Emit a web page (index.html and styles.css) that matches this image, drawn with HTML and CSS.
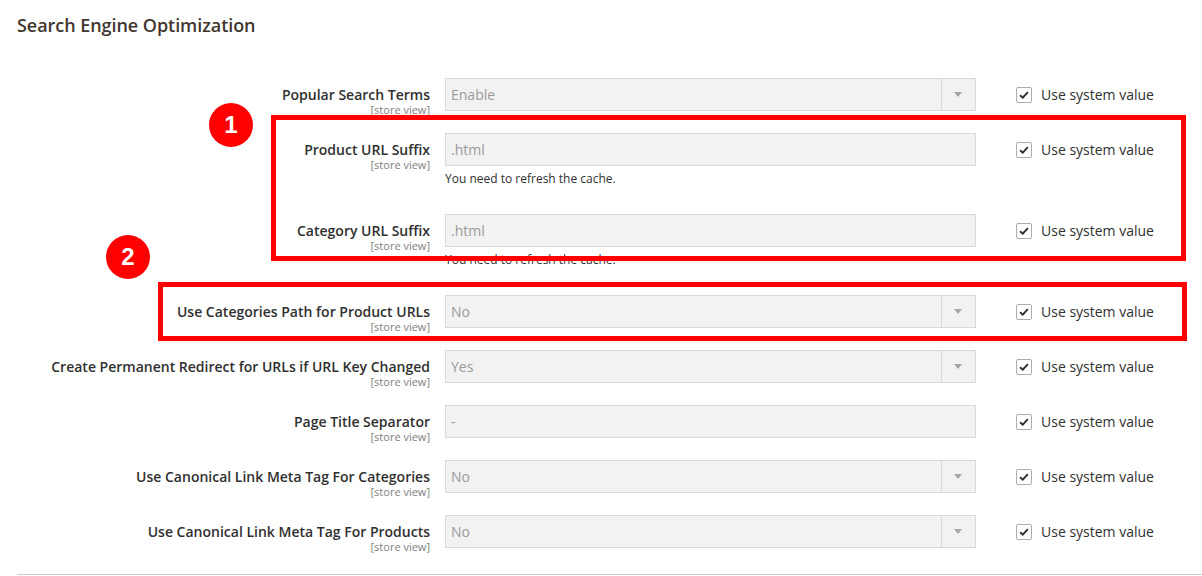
FILE: index.html
```html
<!DOCTYPE html>
<html lang="en">
  <head>
    <meta charset="UTF-8">
    <title>Search Engine Optimization</title>
    <link rel="stylesheet" href="styles.css">
  </head>
  <body>
    <div class="section">
      <h2 class="section-title">Search Engine Optimization</h2>

      <div class="fields">
        <div class="row">
          <div class="label">Popular Search Terms<span class="scope">[store view]</span></div>
          <div class="control">
            <div class="select">Enable<span class="arrow"></span></div>
          </div>
          <div class="use-default"><span class="checkbox"><svg viewBox="0 0 16 16"><path d="M3.5 8.2 L6.6 11 L12.4 4.8"/></svg></span>Use system value</div>
        </div>

        <div class="row">
          <div class="label">Product URL Suffix<span class="scope">[store view]</span></div>
          <div class="control">
            <div class="input">.html</div>
            <div class="note">You need to refresh the cache.</div>
          </div>
          <div class="use-default"><span class="checkbox"><svg viewBox="0 0 16 16"><path d="M3.5 8.2 L6.6 11 L12.4 4.8"/></svg></span>Use system value</div>
        </div>

        <div class="row">
          <div class="label">Category URL Suffix<span class="scope">[store view]</span></div>
          <div class="control">
            <div class="input">.html</div>
            <div class="note">You need to refresh the cache.</div>
          </div>
          <div class="use-default"><span class="checkbox"><svg viewBox="0 0 16 16"><path d="M3.5 8.2 L6.6 11 L12.4 4.8"/></svg></span>Use system value</div>
        </div>

        <div class="row">
          <div class="label">Use Categories Path for Product URLs<span class="scope">[store view]</span></div>
          <div class="control">
            <div class="select">No<span class="arrow"></span></div>
          </div>
          <div class="use-default"><span class="checkbox"><svg viewBox="0 0 16 16"><path d="M3.5 8.2 L6.6 11 L12.4 4.8"/></svg></span>Use system value</div>
        </div>

        <div class="row">
          <div class="label">Create Permanent Redirect for URLs if URL Key Changed<span class="scope">[store view]</span></div>
          <div class="control">
            <div class="select">Yes<span class="arrow"></span></div>
          </div>
          <div class="use-default"><span class="checkbox"><svg viewBox="0 0 16 16"><path d="M3.5 8.2 L6.6 11 L12.4 4.8"/></svg></span>Use system value</div>
        </div>

        <div class="row">
          <div class="label">Page Title Separator<span class="scope">[store view]</span></div>
          <div class="control">
            <div class="input">-</div>
          </div>
          <div class="use-default"><span class="checkbox"><svg viewBox="0 0 16 16"><path d="M3.5 8.2 L6.6 11 L12.4 4.8"/></svg></span>Use system value</div>
        </div>

        <div class="row">
          <div class="label">Use Canonical Link Meta Tag For Categories<span class="scope">[store view]</span></div>
          <div class="control">
            <div class="select">No<span class="arrow"></span></div>
          </div>
          <div class="use-default"><span class="checkbox"><svg viewBox="0 0 16 16"><path d="M3.5 8.2 L6.6 11 L12.4 4.8"/></svg></span>Use system value</div>
        </div>

        <div class="row">
          <div class="label">Use Canonical Link Meta Tag For Products<span class="scope">[store view]</span></div>
          <div class="control">
            <div class="select">No<span class="arrow"></span></div>
          </div>
          <div class="use-default"><span class="checkbox"><svg viewBox="0 0 16 16"><path d="M3.5 8.2 L6.6 11 L12.4 4.8"/></svg></span>Use system value</div>
        </div>
      </div>

      <div class="section-end"></div>
    </div>

    <!-- annotations drawn over the form -->
    <div class="mark mark-1"></div>
    <div class="mark mark-2"></div>
    <div class="badge badge-1">1</div>
    <div class="badge badge-2">2</div>
  </body>
</html>
```

FILE: styles.css
```css
body{
  margin: 0;
  font-family: "Open Sans", "Liberation Sans", sans-serif;
  color: #303030;
  position: relative;
}

.section{
  padding-left: 17px;
}

.section-title{
  margin: 13px 0 41px;
  font-size: 18px;
  line-height: 24px;
  font-weight: 600;
  color: #41362f;
  letter-spacing: -0.05px;
}

.row{
  display: flex;
  align-items: flex-start;
  margin-bottom: 22px;
}

.label{
  width: 413px;
  height: 33px;
  box-sizing: border-box;
  padding-top: 7px;
  text-align: right;
  font-size: 14px;
  line-height: 19px;
  font-weight: 600;
}

.scope{
  display: block;
  font-size: 11px;
  line-height: 12px;
  font-weight: 400;
  color: #808080;
}

.control{
  width: 531px;
  margin-left: 15px;
}

.input,
.select{
  position: relative;
  height: 33px;
  box-sizing: border-box;
  border: 1px solid #d9d9d9;
  background: #f2f2f2;
  color: #9a9a9a;
  font-size: 14px;
  line-height: 31px;
  padding-left: 5px;
}

.select .arrow{
  position: absolute;
  top: 0;
  right: 0;
  bottom: 0;
  width: 33px;
  border-left: 1px solid #d9d9d9;
}

.select .arrow::after{
  content: '';
  position: absolute;
  left: 12px;
  top: 13px;
  border-left: 4px solid transparent;
  border-right: 4px solid transparent;
  border-top: 5px solid #a6a6a6;
}

.note{
  margin: 4px 0 4px;
  font-size: 12px;
  line-height: 18px;
}

.use-default{
  display: flex;
  align-items: center;
  height: 33px;
  margin-left: 40px;
  font-size: 14px;
  gap: 9px;
}

.checkbox{
  width: 16px;
  height: 16px;
  box-sizing: border-box;
  border: 1px solid #adadad;
  border-radius: 2px;
  background: #fff;
}

.checkbox svg{
  display: block;
  width: 14px;
  height: 14px;
  fill: none;
  stroke: #303030;
  stroke-width: 2.2;
}

.section-end{
  margin-top: 26px;
  border-top: 1px solid #cccccc;
}

.mark{
  position: absolute;
  border: 5px solid #ff0000;
  box-sizing: border-box;
}

.mark-1{
  left: 271px;
  top: 115px;
  width: 915px;
  height: 146px;
}

.mark-2{
  left: 158px;
  top: 282px;
  width: 1029px;
  height: 59px;
}

.badge{
  position: absolute;
  width: 44px;
  height: 44px;
  border-radius: 50%;
  background: #ff0000;
  color: #fff;
  font-family: "Liberation Sans", Arial, sans-serif;
  font-weight: 700;
  font-size: 24px;
  line-height: 44px;
  text-align: center;
}

.badge-1{
  left: 209px;
  top: 103px;
}

.badge-2{
  left: 106px;
  top: 235px;
}
```
